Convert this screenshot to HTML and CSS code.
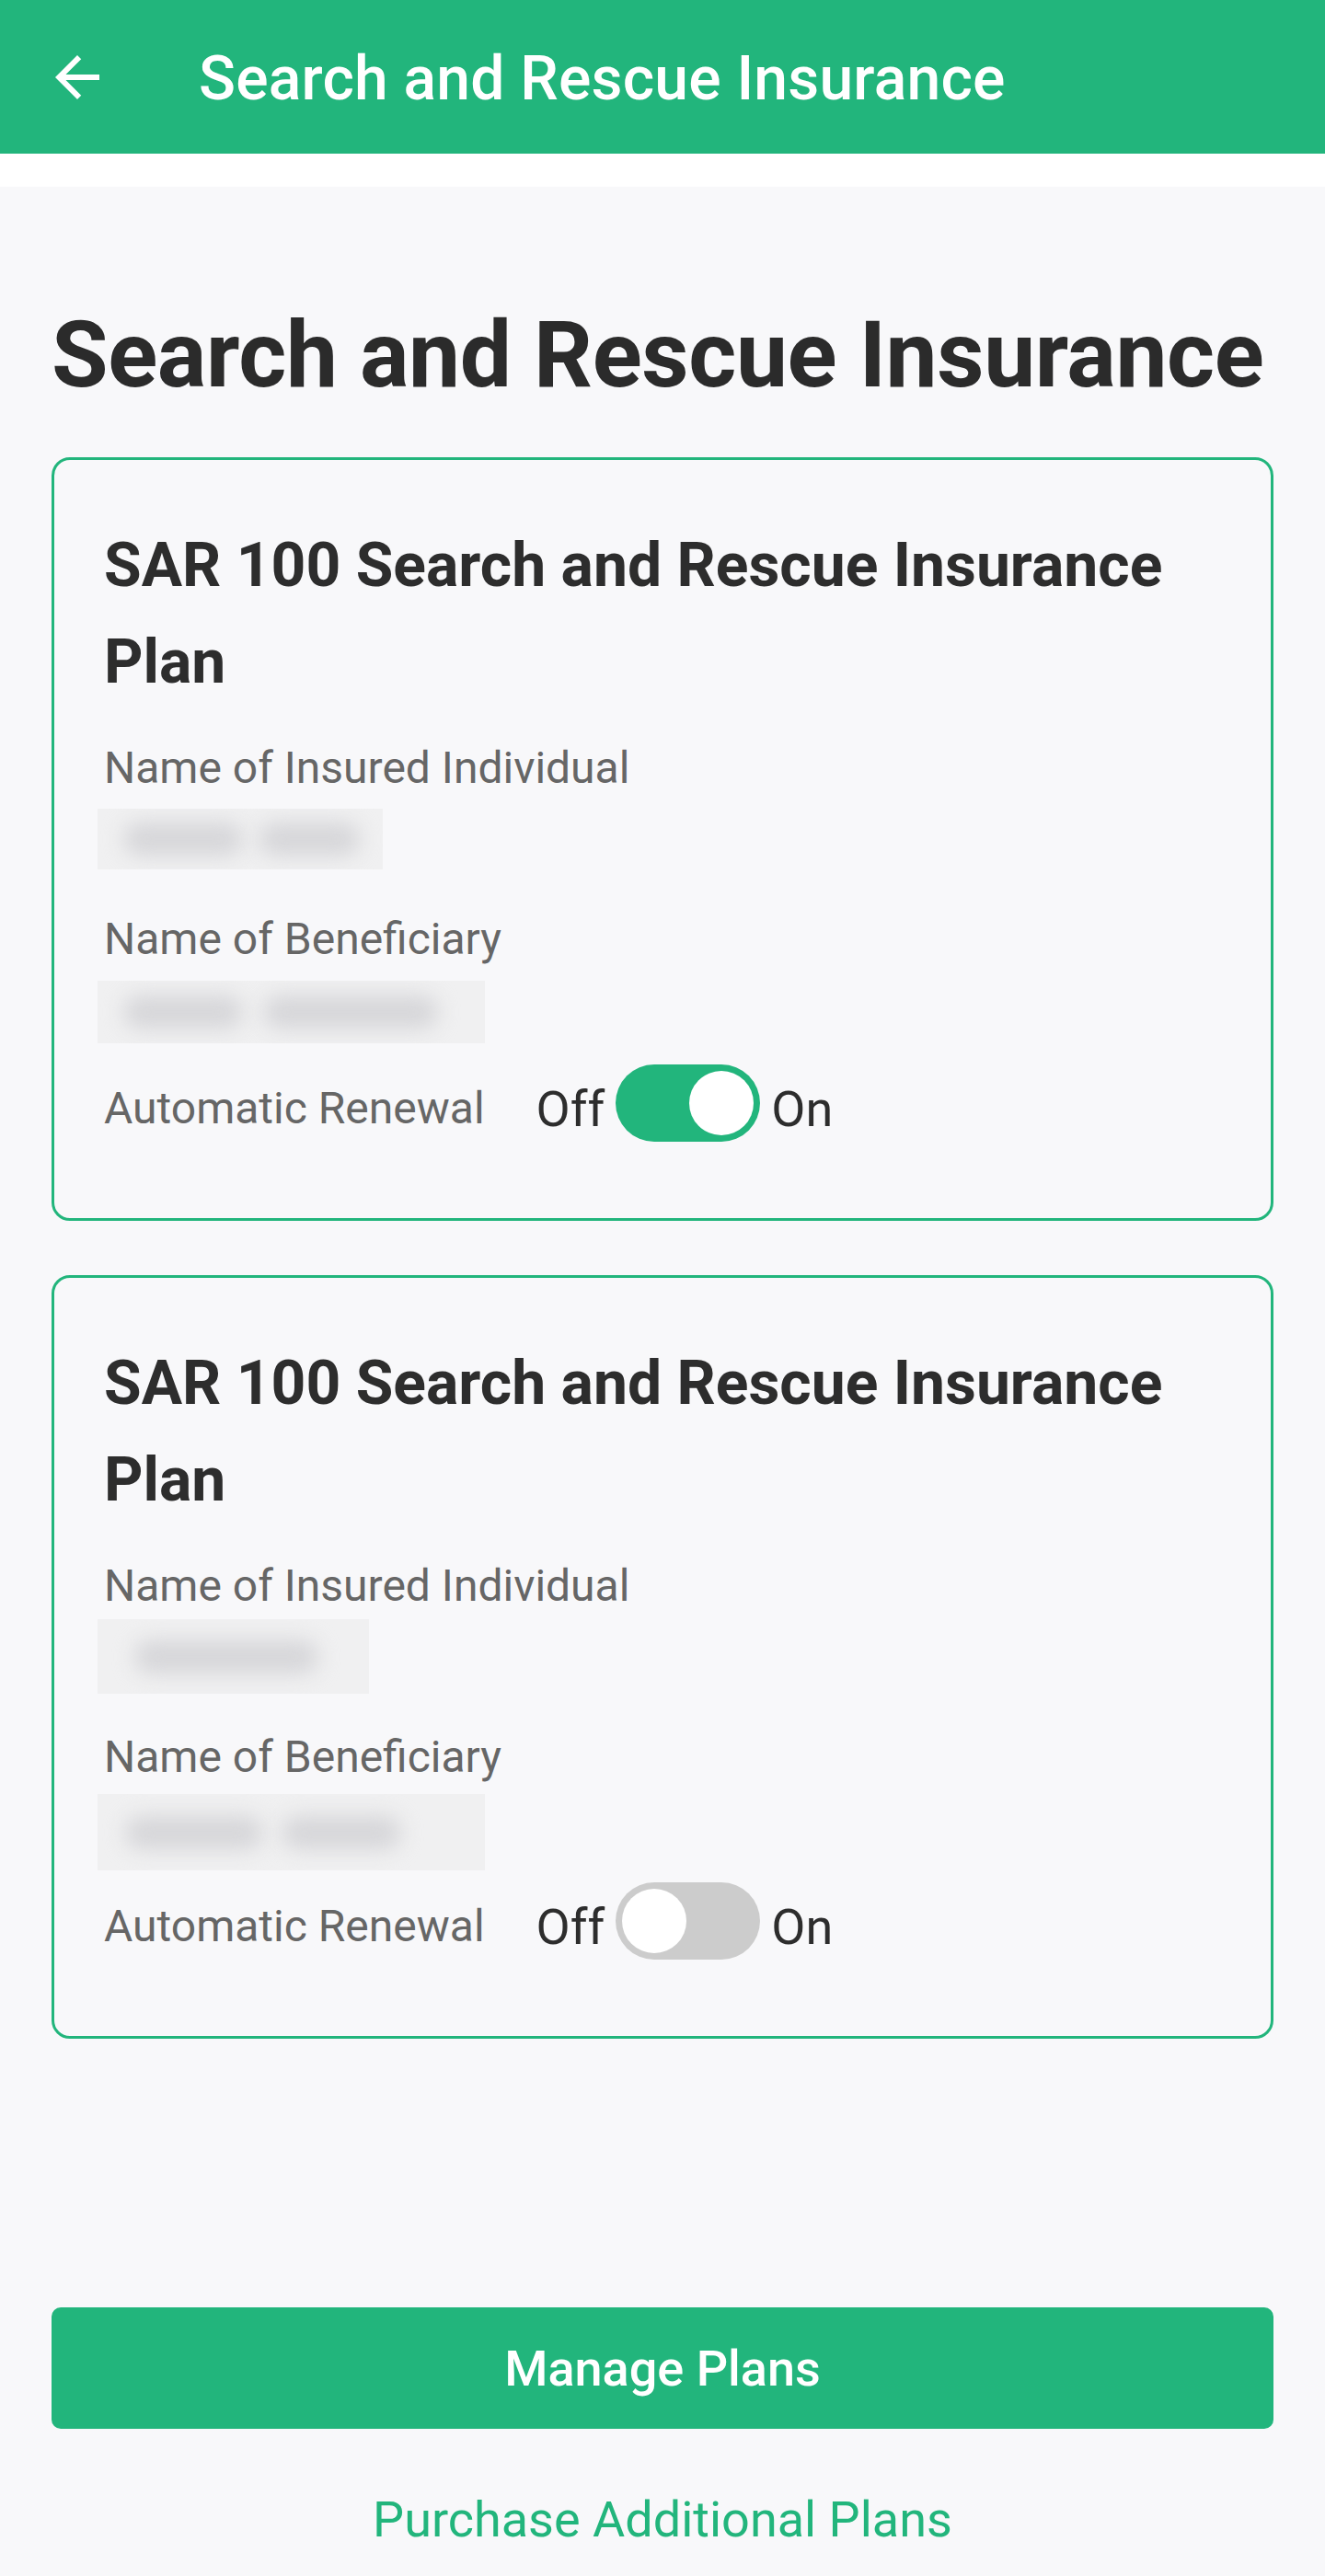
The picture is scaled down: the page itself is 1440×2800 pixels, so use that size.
FILE: index.html
```html
<!DOCTYPE html>
<html lang="en">
<head>
<meta charset="utf-8">
<title>Search and Rescue Insurance</title>
<link rel="stylesheet" href="styles.css">
</head>
<body>
<div class="app">
  <header class="appbar">
    <button class="back" aria-label="Back">
      <svg viewBox="0 0 24 24" width="72" height="72"><path d="M20 11H7.83l5.59-5.59L12 4l-8 8 8 8 1.41-1.41L7.83 13H20v-2z" fill="#ffffff"/></svg>
    </button>
    <h1 class="appbar-title">Search and Rescue Insurance</h1>
  </header>
  <div class="strip"></div>
  <main class="content">
    <h2 class="page-title">Search and Rescue Insurance</h2>

    <section class="card">
      <h3 class="card-title">SAR 100 Search and Rescue Insurance Plan</h3>
      <div class="field">
        <div class="label">Name of Insured Individual</div>
        <div class="value"><div class="redact r-a"><span class="blob blob-1"></span><span class="blob blob-2"></span></div></div>
      </div>
      <div class="field">
        <div class="label">Name of Beneficiary</div>
        <div class="value"><div class="redact r-b"><span class="blob blob-1"></span><span class="blob blob-3"></span></div></div>
      </div>
      <div class="renewal">
        <span class="renewal-label">Automatic Renewal</span>
        <span class="state">Off</span>
        <span class="switch is-on"><span class="knob"></span></span>
        <span class="state">On</span>
      </div>
    </section>

    <section class="card">
      <h3 class="card-title">SAR 100 Search and Rescue Insurance Plan</h3>
      <div class="field">
        <div class="label">Name of Insured Individual</div>
        <div class="value"><div class="redact r-c"><span class="blob blob-4"></span></div></div>
      </div>
      <div class="field">
        <div class="label">Name of Beneficiary</div>
        <div class="value"><div class="redact r-d"><span class="blob blob-5"></span><span class="blob blob-6"></span></div></div>
      </div>
      <div class="renewal">
        <span class="renewal-label">Automatic Renewal</span>
        <span class="state">Off</span>
        <span class="switch"><span class="knob"></span></span>
        <span class="state">On</span>
      </div>
    </section>

    <div class="actions">
      <button class="primary">Manage Plans</button>
      <a class="link" href="#">Purchase Additional Plans</a>
    </div>
  </main>
</div>
</body>
</html>
```
FILE: styles.css
```css
* { box-sizing: border-box; }

html, body {
  margin: 0;
  padding: 0;
}

body {
  font-family: Roboto, "Liberation Sans", Arial, sans-serif;
  background: #f8f8fa;
  color: #2d2d2d;
}

.app {
  min-height: 100vh;
  display: flex;
  flex-direction: column;
}

/* App bar */
.appbar {
  height: 167px;
  background: #22b57c;
  display: flex;
  align-items: center;
  flex-shrink: 0;
}

.back {
  width: 72px;
  height: 72px;
  margin-left: 48px;
  padding: 0;
  border: 0;
  background: transparent;
  display: flex;
  align-items: center;
  justify-content: center;
}

.back svg { display: block; }

.appbar-title {
  margin: 0 0 0 96px;
  padding-top: 4px;
  font-size: 66px;
  font-weight: 500;
  color: #ffffff;
  letter-spacing: 0.2px;
  white-space: nowrap;
}

.strip {
  height: 36px;
  background: #ffffff;
  flex-shrink: 0;
}

/* Content */
.content {
  flex: 1;
  display: flex;
  flex-direction: column;
  padding: 122px 56px 21px;
}

.page-title {
  margin: 0 0 50px;
  font-size: 100px;
  line-height: 122px;
  font-weight: 700;
  letter-spacing: -0.4px;
  color: #2b2b2b;
  white-space: nowrap;
}

.card {
  border: 3px solid #22b57c;
  border-radius: 20px;
  padding: 62px 54px 83px;
  margin-bottom: 59px;
  background: #f8f8fa;
}

.card-title {
  margin: 0 0 31px;
  font-size: 66px;
  line-height: 105px;
  font-weight: 700;
  color: #2d2d2d;
}

.field + .field { margin-top: 42px; }

.label {
  font-size: 48px;
  line-height: 64px;
  color: #666666;
}

.value {
  position: relative;
  height: 68px;
  margin-top: 12px;
}

/* redaction overlays covering personal data */
.redact {
  position: absolute;
  left: -7px;
  background: #f0f0f1;
  overflow: hidden;
}

.r-a { top: 0; width: 310px; height: 66px; }
.r-b { top: 1px; width: 421px; height: 68px; }
.r-c { top: -8px; width: 295px; height: 81px; }
.r-d { top: -4px; width: 421px; height: 83px; }

.blob {
  position: absolute;
  top: 50%;
  height: 36px;
  margin-top: -18px;
  border-radius: 18px;
  background: #d6d6d9;
  filter: blur(11px);
}

.blob-1 { left: 28px; width: 130px; }
.blob-2 { left: 175px; width: 110px; }
.blob-3 { left: 180px; width: 190px; }
.blob-4 { left: 40px; width: 200px; }
.blob-5 { left: 30px; width: 150px; }
.blob-6 { left: 200px; width: 130px; }

/* Renewal row */
.renewal {
  margin-top: 24px;
  display: flex;
  align-items: center;
  height: 84px;
}

.renewal-label {
  font-size: 48px;
  color: #666666;
  margin-right: 56px;
  padding-top: 10px;
}

.state {
  font-size: 54px;
  color: #2d2d2d;
  padding-top: 12px;
}

.switch {
  width: 157px;
  height: 84px;
  border-radius: 42px;
  background: #cccccc;
  padding: 7px;
  margin: 0 12px;
  display: flex;
  justify-content: flex-start;
}

.switch.is-on {
  background: #22b57c;
  justify-content: flex-end;
}

.knob {
  width: 70px;
  height: 70px;
  border-radius: 50%;
  background: #ffffff;
}

/* Actions */
.actions {
  margin-top: auto;
  display: flex;
  flex-direction: column;
  align-items: stretch;
}

.primary {
  height: 132px;
  border: 0;
  border-radius: 10px;
  background: #22b57c;
  color: #ffffff;
  font-family: Roboto, "Liberation Sans", Arial, sans-serif;
  font-size: 54px;
  font-weight: 500;
  padding: 0;
}

.link {
  margin-top: 59px;
  text-align: center;
  font-size: 54px;
  line-height: 80px;
  color: #22b57c;
  text-decoration: none;
}
```
